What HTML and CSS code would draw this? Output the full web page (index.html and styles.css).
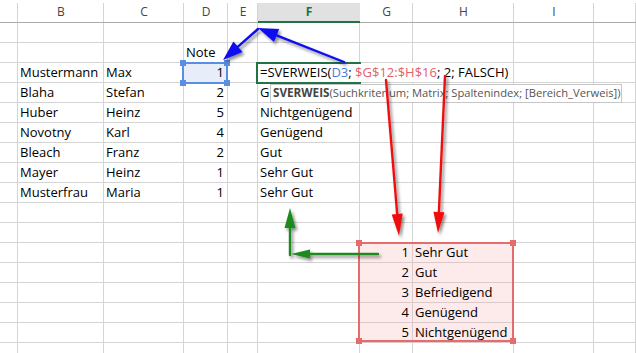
FILE: index.html
```html
<!DOCTYPE html>
<html lang="de">
<head>
<meta charset="utf-8">
<title>SVERWEIS</title>
<link rel="stylesheet" href="styles.css">
</head>
<body>
<div class="sheet">
  <div class="c h"></div><div class="c h">B</div><div class="c h">C</div><div class="c h">D</div><div class="c h">E</div><div class="c h act">F</div><div class="c h">G</div><div class="c h">H</div><div class="c h">I</div><div class="c h"></div>

  <div class="c"></div><div class="c"></div><div class="c"></div><div class="c"></div><div class="c"></div><div class="c"></div><div class="c"></div><div class="c"></div><div class="c"></div><div class="c"></div>
  <div class="c"></div><div class="c"></div><div class="c"></div><div class="c">Note</div><div class="c"></div><div class="c"></div><div class="c"></div><div class="c"></div><div class="c"></div><div class="c"></div>
  <div class="c"></div><div class="c">Mustermann</div><div class="c">Max</div><div class="c n ref-d">1</div><div class="c"></div><div class="c edit">=SVERWEIS(<span class="f-blue">D3</span>; <span class="f-red">$G$12:$H$16</span>; 2; FALSCH)</div><div class="c"></div><div class="c"></div>
  <div class="c"></div><div class="c">Blaha</div><div class="c">Stefan</div><div class="c n">2</div><div class="c"></div><div class="c">Gut</div><div class="c"></div><div class="c"></div><div class="c"></div><div class="c"></div>
  <div class="c"></div><div class="c">Huber</div><div class="c">Heinz</div><div class="c n">5</div><div class="c"></div><div class="c">Nichtgenügend</div><div class="c"></div><div class="c"></div><div class="c"></div><div class="c"></div>
  <div class="c"></div><div class="c">Novotny</div><div class="c">Karl</div><div class="c n">4</div><div class="c"></div><div class="c">Genügend</div><div class="c"></div><div class="c"></div><div class="c"></div><div class="c"></div>
  <div class="c"></div><div class="c">Bleach</div><div class="c">Franz</div><div class="c n">2</div><div class="c"></div><div class="c">Gut</div><div class="c"></div><div class="c"></div><div class="c"></div><div class="c"></div>
  <div class="c"></div><div class="c">Mayer</div><div class="c">Heinz</div><div class="c n">1</div><div class="c"></div><div class="c">Sehr Gut</div><div class="c"></div><div class="c"></div><div class="c"></div><div class="c"></div>
  <div class="c"></div><div class="c">Musterfrau</div><div class="c">Maria</div><div class="c n">1</div><div class="c"></div><div class="c">Sehr Gut</div><div class="c"></div><div class="c"></div><div class="c"></div><div class="c"></div>
  <div class="c"></div><div class="c"></div><div class="c"></div><div class="c"></div><div class="c"></div><div class="c"></div><div class="c"></div><div class="c"></div><div class="c"></div><div class="c"></div>
  <div class="c"></div><div class="c"></div><div class="c"></div><div class="c"></div><div class="c"></div><div class="c"></div><div class="c"></div><div class="c"></div><div class="c"></div><div class="c"></div>
  <div class="c"></div><div class="c"></div><div class="c"></div><div class="c"></div><div class="c"></div><div class="c"></div><div class="c n tb">1</div><div class="c tb">Sehr Gut</div><div class="c"></div><div class="c"></div>
  <div class="c"></div><div class="c"></div><div class="c"></div><div class="c"></div><div class="c"></div><div class="c"></div><div class="c n tb">2</div><div class="c tb">Gut</div><div class="c"></div><div class="c"></div>
  <div class="c"></div><div class="c"></div><div class="c"></div><div class="c"></div><div class="c"></div><div class="c"></div><div class="c n tb">3</div><div class="c tb">Befriedigend</div><div class="c"></div><div class="c"></div>
  <div class="c"></div><div class="c"></div><div class="c"></div><div class="c"></div><div class="c"></div><div class="c"></div><div class="c n tb">4</div><div class="c tb">Genügend</div><div class="c"></div><div class="c"></div>
  <div class="c"></div><div class="c"></div><div class="c"></div><div class="c"></div><div class="c"></div><div class="c"></div><div class="c n tb">5</div><div class="c tb">Nichtgenügend</div><div class="c"></div><div class="c"></div>
  <div class="c"></div><div class="c"></div><div class="c"></div><div class="c"></div><div class="c"></div><div class="c"></div><div class="c"></div><div class="c"></div><div class="c"></div><div class="c"></div>

  <div class="box box-d"><span class="hd tl"></span><span class="hd tr"></span><span class="hd bl"></span><span class="hd br"></span></div>
  <div class="box box-f"></div>
  <div class="box box-t"><span class="hd tl"></span><span class="hd tr"></span><span class="hd bl"></span><span class="hd br"></span></div>

  <div class="tip"><b>SVERWEIS</b>(Suchkriterium; Matrix; Spaltenindex; [Bereich_Verweis])</div>

  <svg class="arrows" width="636" height="353" viewBox="0 0 636 353" aria-hidden="true">
    <defs>
      <filter id="sh" filterUnits="userSpaceOnUse" x="0" y="0" width="636" height="353">
        <feDropShadow dx="2" dy="2.5" stdDeviation="1.4" flood-color="#000" flood-opacity="0.45"/>
      </filter>
    </defs>
    <g filter="url(#sh)" stroke-linecap="round">
      <g class="a-blue">
        <line x1="344" y1="62" x2="276.6" y2="35.4"/>
        <polygon points="258,28 279.2,28.9 274,41.9"/>
        <line x1="258" y1="29" x2="238" y2="46.7"/>
        <polygon points="223,60 233.4,41.5 242.6,52"/>
      </g>
      <g class="a-red">
        <line x1="386" y1="80" x2="397.2" y2="214.1"/>
        <polygon points="399,236 391.7,214.5 402.7,213.6"/>
        <line x1="445" y1="76" x2="438.9" y2="212"/>
        <polygon points="438,233 433.4,211.8 444.4,212.3"/>
      </g>
      <g class="a-green">
        <line x1="290" y1="255" x2="290" y2="226"/>
        <polygon points="290,208 284.5,228 295.5,228"/>
        <line x1="378" y1="254" x2="308" y2="254"/>
        <polygon points="291,254 310,249.5 310,258.5"/>
      </g>
    </g>
  </svg>
</div>
</body>
</html>
```
FILE: styles.css
```css
html, body {
  margin: 0;
  padding: 0;
  background: #fff;
  overflow: hidden;
}

body {
  width: 636px;
  height: 353px;
}

.sheet {
  position: relative;
  display: grid;
  grid-template-columns: 18px 86px 80px 44px 30px 102px 53px 101px 80px 1fr;
  grid-template-rows: 23px repeat(17, 20px);
  width: 636px;
  height: 353px;
  overflow: hidden;
  font-family: "Open Sans", Lato, sans-serif;
  font-size: 13px;
  color: #000;
}

.c {
  border-right: 1px solid #d4d4d4;
  border-bottom: 1px solid #d4d4d4;
  padding: 0 3px 0 2px;
  line-height: 19px;
  white-space: nowrap;
  overflow: hidden;
}

.n {
  text-align: right;
}

.h {
  border-right: 0;
  border-bottom: 1px solid #ababab;
  background: linear-gradient(#d4d4d4, #d4d4d4) no-repeat right 0 top 3px / 1px 19px;
  padding: 2px 0 0;
  font-size: 12px;
  line-height: 20px;
  text-align: center;
  color: #444;
}

.h.act {
  background: linear-gradient(#e1e1e1, #e1e1e1) no-repeat 0 3px / 100% 18px;
  border-bottom: 2px solid #217346;
  color: #217346;
  font-weight: 700;
}

.ref-d {
  background: #e7edf9;
}

.tb {
  background: #fdeaea;
  border-color: #dccaca;
}

.edit {
  grid-column: span 3;
  overflow: visible;
}

.f-blue {
  color: #3f7ee0;
}

.f-red {
  color: #e4606a;
}

.box {
  position: absolute;
  pointer-events: none;
}

.box-d {
  grid-column: 4 / 5;
  grid-row: 4 / 5;
  top: -1px;
  left: -2px;
  right: 0;
  bottom: -1px;
  border: 2px solid #5a8ee4;
}

.box-f {
  grid-column: 6 / 7;
  grid-row: 4 / 5;
  top: -1px;
  left: -2px;
  right: -1px;
  bottom: -1px;
  border: 2px solid #217346;
  border-right: 0;
}

.box-t {
  grid-column: 7 / 9;
  grid-row: 13 / 18;
  top: -1px;
  left: -2px;
  right: 0;
  bottom: 1px;
  border: 2px solid #e46c6c;
}

.hd {
  position: absolute;
  width: 6px;
  height: 6px;
  background: #5a8ee4;
}

.box-t .hd {
  background: #e46c6c;
}

.hd.tl { top: -4px; left: -4px; }
.hd.tr { top: -4px; right: -4px; }
.hd.bl { bottom: -4px; left: -4px; }
.hd.br { bottom: -4px; right: -4px; }

.tip {
  position: absolute;
  left: 270px;
  top: 84px;
  width: 352px;
  height: 19px;
  box-sizing: border-box;
  border: 1px solid #c6c6c6;
  background: #fff;
  padding: 0 2px;
  font-family: "Open Sans", Lato, sans-serif;
  font-size: 11.2px;
  line-height: 15px;
  color: #555;
  white-space: nowrap;
  overflow: hidden;
}

.tip b {
  font-size: 11.7px;
  color: #444;
}

.arrows {
  position: absolute;
  left: 0;
  top: 0;
  pointer-events: none;
}

.arrows line {
  stroke-width: 2.4;
}

.a-blue line { stroke: #1010f0; }
.a-blue polygon { fill: #1010f0; }
.a-red line { stroke: #f01010; }
.a-red polygon { fill: #f01010; }
.a-green line { stroke: #1f8a1f; }
.a-green polygon { fill: #1f8a1f; }
```
